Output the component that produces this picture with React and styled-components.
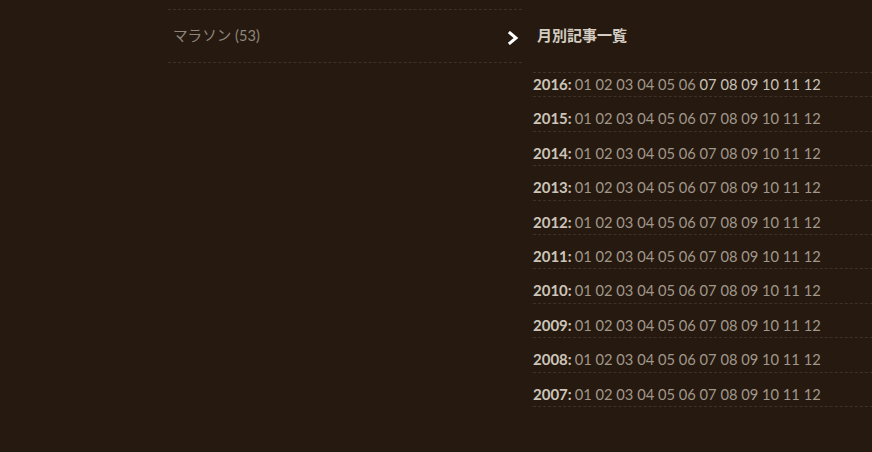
import React from 'react';
import styled, { createGlobalStyle } from 'styled-components';

const GlobalStyle = createGlobalStyle`
  html, body {
    margin: 0;
    padding: 0;
    background: #261a10;
    overflow: hidden;
  }
  body {
    font-family: Lato, "Noto Sans CJK JP", sans-serif;
  }
`;

const Page = styled.div`
  display: flex;
  align-items: flex-start;
  padding-left: 168px;
  gap: 11px;
  width: 872px;
  height: 452px;
  box-sizing: border-box;
`;

const LeftColumn = styled.div`
  width: 354px;
  flex: none;
  padding-top: 9px;
`;

const CategoryList = styled.ul`
  list-style: none;
  margin: 0;
  padding: 0;
  border-top: 1px dashed #3e3227;
`;

const CategoryItem = styled.li`
  height: 51px;
  line-height: 51px;
  padding: 0 5px 1px;
  border-bottom: 1px dashed #3e3227;
  font-size: 14.6px;
  color: #8f867b;
`;

const RightColumn = styled.div`
  width: 360px;
  flex: none;
  padding-top: 10px;
`;

const Heading = styled.h3`
  display: flex;
  align-items: center;
  height: 48px;
  margin: 0 0 10px;
  padding: 0 0 4px 4px;
  font-size: 15px;
  font-weight: 700;
  color: #d4ccc1;
  font-family: "Noto Sans CJK JP", Lato, sans-serif;
`;

const Chevron = styled.svg`
  width: 12px;
  height: 14px;
  margin-left: -30px;
  margin-right: 18px;
  margin-top: 7px;
`;

const ArchiveList = styled.ul`
  list-style: none;
  margin: 0;
  padding: 0;
  border-top: 1px dashed #3e3227;
`;

const ArchiveRow = styled.li`
  padding: 3px 0;
  line-height: 17.4px;
  font-size: 14.7px;
  white-space: nowrap;
  border-bottom: 1px dashed #3e3227;
  & + & {
    margin-top: 10px;
  }
`;

const Year = styled.strong`
  font-size: 15px;
  font-weight: 700;
  color: #cdc5ba;
  margin-right: 3px;
`;

const Month = styled.span`
  color: ${p => (p.$bright ? '#c9c2b8' : '#a1978b')};
`;

const years = [2016, 2015, 2014, 2013, 2012, 2011, 2010, 2009, 2008, 2007];
const months = ['01', '02', '03', '04', '05', '06', '07', '08', '09', '10', '11', '12'];

export default function App() {
  return (
    <>
      <GlobalStyle />
      <Page>
        <LeftColumn>
          <CategoryList>
            <CategoryItem>マラソン (53)</CategoryItem>
          </CategoryList>
        </LeftColumn>
        <RightColumn>
          <Heading>
            <Chevron viewBox="0 0 12 14">
              <polyline points="3,2 9,7 3,12" fill="none" stroke="#ffffff" strokeWidth="3" strokeLinecap="square" />
            </Chevron>
            月別記事一覧
          </Heading>
          <ArchiveList>
            {years.map(y => (
              <ArchiveRow key={y}>
                <Year>{y}:</Year>
                {months.map((m, i) => (
                  <React.Fragment key={m}>
                    <Month $bright={y === 2016 && i >= 6}>{m}</Month>
                    {i < 11 && ' '}
                  </React.Fragment>
                ))}
              </ArchiveRow>
            ))}
          </ArchiveList>
        </RightColumn>
      </Page>
    </>
  );
}
